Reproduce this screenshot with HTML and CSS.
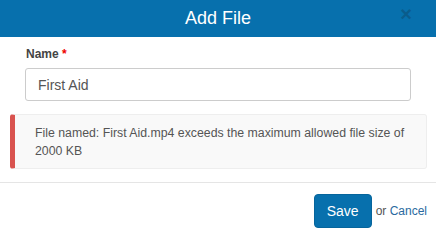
FILE: index.html
```html
<!DOCTYPE html>
<html>
<head>
<meta charset="utf-8">
<link rel="stylesheet" href="styles.css">
</head>
<body>
<div class="modal">
  <div class="modal-header">
    <h1 class="title">Add File</h1>
    <span class="close">&times;</span>
  </div>
  <div class="modal-body">
    <label class="label">Name <span class="req">*</span></label>
    <div class="input">First Aid</div>
  </div>
  <div class="alert">File named: First Aid.mp4 exceeds the maximum allowed file size of 2000 KB</div>
  <div class="modal-footer">
    <button class="btn">Save</button>
    <span class="or">or <a class="cancel">Cancel</a></span>
  </div>
</div>
</body>
</html>
```
FILE: styles.css
```css
html, body { margin: 0; padding: 0; background: #fff; }
body { font-family: "Liberation Sans", Arial, sans-serif; color: #555; width: 436px; height: 234px; overflow: hidden; }
.modal { display: flex; flex-direction: column; }
.modal-header { position: relative; height: 37px; background: #0770ad; display: flex; align-items: center; justify-content: center; }
.title { margin: 0; font-size: 18px; font-weight: normal; color: #fff; line-height: 37px; }
.close { position: absolute; right: 24px; top: 4px; font-size: 20px; font-weight: bold; color: #0a5c8c; line-height: 20px; }
.modal-body { padding: 10px 25px 0 25px; display: flex; flex-direction: column; }
.label { font-size: 12px; font-weight: bold; color: #444; line-height: 14px; margin-left: 1px; }
.req { color: #e00; }
.input { margin-top: 7px; height: 33px; box-sizing: border-box; width: 386px; border: 1px solid #ccc; border-radius: 3px; padding: 0 12px; font-size: 14px; color: #555; line-height: 32px; }
.alert { margin: 13px 10px 0 10px; width: 417px; box-sizing: border-box; background: #f9f9f9; border: 1px solid #eee; border-left: 5px solid #d9534f; border-radius: 3px; padding: 9px 15px 0 20px; font-size: 12.3px; line-height: 18px; color: #555; height: 55px; }
.modal-footer { margin-top: 13px; border-top: 1px solid #e5e5e5; display: flex; align-items: center; justify-content: flex-end; padding: 11px 9px 0 0; }
.btn { background: #0770ad; color: #fff; border: 1px solid #06659c; border-radius: 4px; font-family: "Liberation Sans", Arial, sans-serif; font-size: 14px; width: 58px; height: 34px; padding: 0; }
.or { margin-left: 4px; font-size: 12px; color: #555; }
.cancel { color: #2a6aa0; }
```
